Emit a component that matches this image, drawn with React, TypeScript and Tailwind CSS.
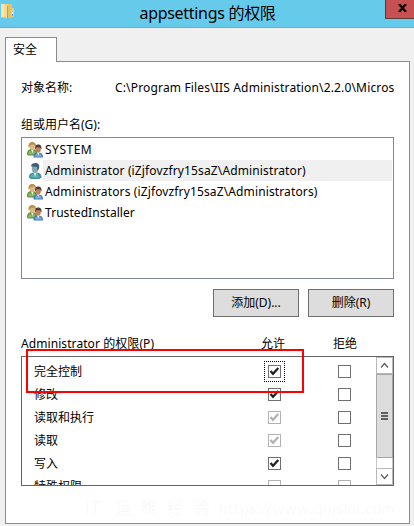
const principals = [
    { name: 'SYSTEM', group: true, tracking: 'tracking-[0.5px]' },
    {
        name: 'Administrator (iZjfovzfry15saZ\\Administrator)',
        group: false,
        selected: true,
        tracking: 'tracking-[0.13px]',
    },
    {
        name: 'Administrators (iZjfovzfry15saZ\\Administrators)',
        group: true,
        tracking: 'tracking-[0.13px]',
    },
    { name: 'TrustedInstaller', group: true, tracking: 'tracking-[0.06px]' },
];

const permissions = [
    { name: '完全控制', allow: true, focused: true },
    { name: '修改', allow: true },
    { name: '读取和执行', allow: true, inherited: true },
    { name: '读取', allow: true, inherited: true },
    { name: '写入', allow: true },
    { name: '特殊权限', allow: false, inherited: true, denyInherited: true },
];

function FolderIcon() {
    return (
        <svg width="14" height="17" viewBox="0 0 14 17" className="block">
            <path d="M0 1h10v13H0z" fill="#ecd07f" />
            <path d="M0 1h3v13.500H0z" fill="#f8e6a6" />
            <path d="M7 1h4v14H7z" fill="#e3c164" />
            <path d="M3 2 7 3.500V16l-4-2z" fill="#f3dc92" />
            <path d="M6 3h1v13H6z" fill="#c99f44" />
            <path d="M10 5h3v9h-3z" fill="#e9cd79" />
            <path d="M11 9h1v4h-1z" fill="#fff" />
            <path d="M11 11h1v2h-1z" fill="#4a9fd8" />
        </svg>
    );
}

function GroupIcon() {
    return (
        <svg width="16" height="16" viewBox="0 0 16 16" className="block">
            <path d="M0 12.500C0 8.500 1.500 7 5 7s5 1.500 5 5.500l-2 1H1z" fill="#5f9440" />
            <path d="m1 11.500 2-3 2 2.500 2-2.500 2 3.500-7 .5z" fill="#8dbd63" />
            <path d="m4 7.500 1.300 3.500 1.500-3.500z" fill="#f1f6e9" />
            <ellipse cx="5.200" cy="4.500" rx="2.800" ry="3.400" fill="#dbb987" />
            <path d="M1.500 5.500C1 1.500 3 0 5.200 0S9.500 1.500 9 5L7.500 3 5 2.500 3 4z" fill="#b8924b" />
            <path d="M6.500 15.500c0-4 1-5 4.300-5s5.200 1 5.200 5z" fill="#447bb0" />
            <path d="m7.500 14.500 2-3 1.800 2 1.700-2 2 3z" fill="#83b1dc" />
            <path d="m10 10.500 1.200 3 1.300-3z" fill="#f3f8fc" />
            <ellipse cx="11.200" cy="7.300" rx="2.600" ry="3.300" fill="#bf8157" />
            <path d="M8.300 7.500C7.500 3.500 9.500 2.500 11.300 2.500s3.700 1.200 3.200 5L13 5.500 10 5z" fill="#513b30" />
        </svg>
    );
}

function UserIcon() {
    return (
        <svg width="13" height="16" viewBox="0 0 13 16" className="block">
            <path d="M0 14.500C0 11 1.500 9.500 6 9.500s6.500 1.500 6.500 5L10 16H2z" fill="#3a8b93" />
            <path d="m1 14 2-3.500L6 13l2-2.500 3 3.500-4 1.300z" fill="#63b1b6" />
            <path d="m4.500 10 1.500 3.500L7.700 10z" fill="#d9efef" />
            <ellipse cx="6" cy="5.500" rx="3.200" ry="4.200" fill="#87a6b0" />
            <path d="M1.800 3C2.500 1 4 0 6.200 0c3.300 0 4.800 2 3.800 5.500L8.800 8 8 4 3 3.500z" fill="#3d6270" />
        </svg>
    );
}

function CheckBox({ checked = false, disabled = false }) {
    return (
        <span
            className={`block h-[13px] w-[13px] shrink-0 border bg-white ${disabled ? 'border-[#b2b2b2]' : 'border-[#707070]'}`}
        >
            {checked && (
                <svg width="11" height="11" viewBox="0 0 11 11" className="block">
                    <path
                        d="M1.500 5 4 7.800 9.300 2"
                        fill="none"
                        stroke={disabled ? '#aeb2b4' : '#202020'}
                        strokeWidth="2.200"
                    />
                </svg>
            )}
        </span>
    );
}

function ScrollBar() {
    return (
        <div className="flex w-[17px] shrink-0 flex-col bg-white">
            <div className="flex h-[17px] items-center justify-center border border-[#b8b8b8]">
                <svg width="9" height="7" viewBox="0 0 9 7">
                    <path d="m1 5.500 3.500-4 3.500 4" fill="none" stroke="#606060" strokeWidth="1.300" />
                </svg>
            </div>
            <div className="flex h-[84px] flex-col items-center justify-center gap-px border border-[#a6a6a6] bg-[#dddddd]">
                <span className="h-[2px] w-[7px] bg-[#606060]" />
                <span className="h-[2px] w-[7px] bg-[#606060]" />
                <span className="h-[2px] w-[7px] bg-[#606060]" />
            </div>
            <div className="h-[10px] border-x border-[#c8c8c8]" />
            <div className="flex h-[17px] items-center justify-center border border-[#b8b8b8]">
                <svg width="9" height="7" viewBox="0 0 9 7">
                    <path d="m1 1.500 3.500 4 3.500-4" fill="none" stroke="#606060" strokeWidth="1.300" />
                </svg>
            </div>
        </div>
    );
}

export default function App() {
    return (
        <div className="flex h-[526px] w-[414px] flex-col overflow-hidden bg-[#f0f0f0] font-['Noto_Sans','Noto_Sans_CJK_SC',sans-serif] text-[12px] leading-4 whitespace-nowrap text-black">
            {/* Title bar */}
            <header className="flex h-7 shrink-0 items-start border-b border-[#62aecb] bg-[#66caeb]">
                <div className="w-[29px] pt-[3px] pl-px">
                    <FolderIcon />
                </div>
                <h1 className="flex-1 pl-px text-center text-[16px] leading-[26px] tracking-[-0.3px]">
                    appsettings 的权限
                </h1>
                <button className="flex h-[19px] w-[29px] items-center justify-center border border-t-0 border-r-0 border-[#5d3b3b] bg-[#c75050] pb-[2px]">
                    <svg width="9" height="8" viewBox="0 0 9 8" className="ml-[5px]">
                        <path d="m1 0 7 8M8 0 1 8" stroke="#000" strokeWidth="2.200" />
                    </svg>
                </button>
            </header>

            <main className="flex flex-col px-[5px] pt-[9px]">
                {/* Tab */}
                <div className="relative z-10 -mb-px flex h-[25px] w-[52px] border border-b-0 border-[#898c95] bg-white pt-[4px] pl-[7px]">
                    安全
                </div>

                <section className="flex h-[463px] w-[405px] flex-col border border-[#898c95] bg-white px-[15px]">
                    <div className="mt-[18px] flex h-4 w-[374px]">
                        <span className="w-[94px] shrink-0">对象名称:</span>
                        <span className="tracking-[0.16px]">
                            C:\Program Files\IIS Administration\2.2.0\Micros
                        </span>
                    </div>
                    <div className="mt-[21px] h-4">组或用户名(G):</div>

                    <div className="mt-[4px] h-[142px] w-[373px] border border-[#828790] pt-px pr-px pl-[5px]">
                        {principals.map((item) => (
                            <div key={item.name} className="flex h-[21px] items-center">
                                <span className="flex w-4 shrink-0 justify-center">
                                    {item.group ? <GroupIcon /> : <UserIcon />}
                                </span>
                                <span
                                    className={`flex h-full flex-1 items-center pl-[2px] ${item.tracking} ${item.selected ? 'bg-[#f0f0f0]' : ''}`}
                                >
                                    {item.name}
                                </span>
                            </div>
                        ))}
                    </div>

                    <div className="mt-[10px] flex w-[373px] justify-end gap-[9px]">
                        <button className="h-7 w-[86px] border border-[#707070] bg-[#dddddd]">
                            添加(D)...
                        </button>
                        <button className="h-7 w-[86px] border border-[#707070] bg-[#dddddd]">
                            删除(R)
                        </button>
                    </div>

                    <div className="mt-[19px] flex h-[20px] w-[373px]">
                        <span className="w-[240px] tracking-[0.08px]">Administrator 的权限(P)</span>
                        <span className="w-[72px]">允许</span>
                        <span>拒绝</span>
                    </div>

                    {/* Permission list */}
                    <div className="relative h-[130px] w-[373px] border border-[#646464]">
                        <div className="flex h-full overflow-hidden">
                            <div className="flex-1 pt-[3px] pl-3">
                                {permissions.map((item) => (
                                    <div key={item.name} className="flex h-[23px] items-center">
                                        <span className="w-[232px] shrink-0">{item.name}</span>
                                        <span
                                            className={`-ml-[2px] flex h-[21px] w-[21px] shrink-0 items-center justify-center border border-dotted ${item.focused ? 'border-black' : 'border-transparent'}`}
                                        >
                                            <CheckBox checked={item.allow} disabled={item.inherited} />
                                        </span>
                                        <span className="ml-[53px]">
                                            <CheckBox disabled={item.denyInherited} />
                                        </span>
                                    </div>
                                ))}
                            </div>
                            <ScrollBar />
                        </div>
                        <div className="absolute -top-2 left-1 h-[44px] w-[278px] border-2 border-[#ff0000]" />
                    </div>

                    <div className="mt-[12px] ml-[64px] flex h-5 items-center font-['Lato','Noto_Sans_CJK_SC',sans-serif] text-[15px] font-light text-[#f8f8f8]">
                        <span className="w-[143px] text-[17px] tracking-[9px]">
                            <span className="tracking-[1px]">IT</span> 运维经验
                        </span>
                        <span className="tracking-[0.9px]">https://www.qnjslm.com</span>
                    </div>
                </section>
            </main>
        </div>
    );
}
